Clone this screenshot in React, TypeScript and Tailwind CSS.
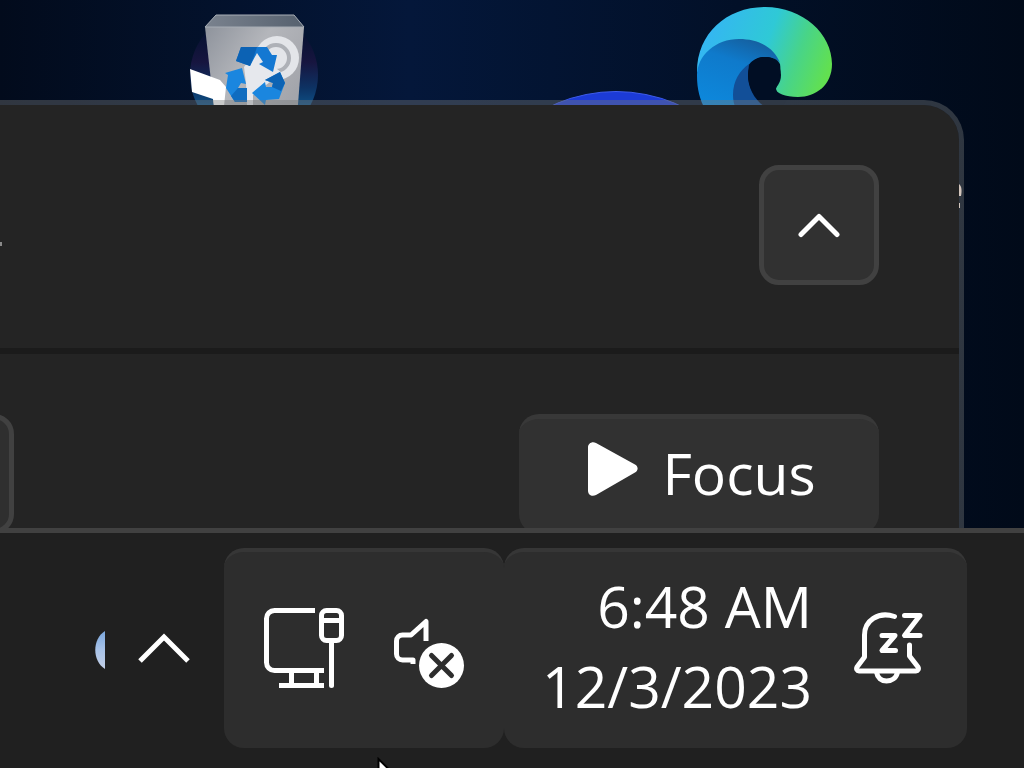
import type { ReactNode } from 'react';

interface TrayButtonProps {
  label: string;
  className?: string;
  children: ReactNode;
}

function RecycleBin() {
  return (
    <svg width="130" height="128" viewBox="188 0 130 128" aria-hidden="true">
      <defs>
        <linearGradient id="orb" x1="0" y1="0" x2="0" y2="1">
          <stop offset="0.15" stopColor="#04112f" />
          <stop offset="0.4" stopColor="#17153f" />
          <stop offset="0.6" stopColor="#0d3263" />
          <stop offset="0.75" stopColor="#0d5187" />
          <stop offset="1" stopColor="#0e5a94" />
        </linearGradient>
        <linearGradient id="bin" x1="0" y1="0" x2="1" y2="0.6">
          <stop offset="0" stopColor="#8e939c" />
          <stop offset="0.5" stopColor="#b4b6bb" />
          <stop offset="1" stopColor="#a3a5ab" />
        </linearGradient>
        <linearGradient id="binTop" x1="0" y1="0" x2="1" y2="0">
          <stop offset="0" stopColor="#7a828e" />
          <stop offset="1" stopColor="#56616f" />
        </linearGradient>
      </defs>
      <circle cx="254" cy="75" r="64" fill="url(#orb)" />
      <path d="M205 27h99l-7 90h-82z" fill="url(#bin)" />
      <path d="M190 69l30 11 6 7-2 19h-10l-1-7-21-7z" fill="#fff" />
      <path d="M205 27l11-12h78l10 12z" fill="url(#binTop)" stroke="#a7adb5" strokeWidth="1" />
      <circle cx="277" cy="58" r="22" fill="#e3e5e9" />
      <circle cx="276" cy="58" r="13" fill="none" stroke="#aeb1b7" strokeWidth="4" />
      <path d="M244 67l8-11h9l21 17-16 12-13 10v10h-6l-1-22z" fill="#e6e8ed" />
      <path d="M241 47h26l5 8h5l-4 17-14-8 4-2-6-9-7 13-14-5z" fill="#1478d2" />
      <path d="M241 47h16l-3 9-4 10-14-5z" fill="#0c62b4" />
      <path d="M225 73l17-5 4 16-5-1-3 5h9v14h-12l-9-14 2-13z" fill="#1a86df" />
      <path d="M238 88h9v14h-12l-4-6z" fill="#0f6cc0" />
      <path d="M280 72l5 11-6 16-13 1-1 5-13-12 13-11 1 5h6l1-4-8-3z" fill="#1a86df" />
      <path d="M280 72l5 11-4 8-9-4 1-4-8-3z" fill="#0c63b4" />
    </svg>
  );
}

function EdgeLogo() {
  return (
    <svg width="136" height="136" viewBox="696 6 136 136" aria-hidden="true">
      <defs>
        <linearGradient id="wave" x1="0" y1="0.35" x2="1" y2="0.6">
          <stop offset="0" stopColor="#35b4f5" />
          <stop offset="0.5" stopColor="#2fc9d6" />
          <stop offset="0.75" stopColor="#48d488" />
          <stop offset="1" stopColor="#62e050" />
        </linearGradient>
        <linearGradient id="sea" x1="0.7" y1="0" x2="0.3" y2="1">
          <stop offset="0" stopColor="#155f9e" />
          <stop offset="0.35" stopColor="#0f7acb" />
          <stop offset="1" stopColor="#0d88dc" />
        </linearGradient>
      </defs>
      <path
        d="M697 72C697 33 727 7 765 7c38 0 67 27 67 57 0 21-16 33-34 33-13 0-22-4-22-8 0-3 5-5 5-14 0-11-8-20-20-20z"
        fill="url(#wave)"
      />
      <path
        d="M697 76c0-21 19-37 42-37 22 0 36 10 41 24-5-5-10-6-16-6-10 0-19 8-19 20 0 11 6 22 20 32h-60c-5-9-8-20-8-33z"
        fill="url(#sea)"
      />
      <path d="M749 64c-9 6-16 17-16 31 0 5 1 10 3 14h32c-13-8-20-20-20-34z" fill="#124f98" />
      <path
        d="M780 64c2 12-4 22-4 25 0 4 6 8 14 8-8 7-6 12-16 12-16-4-26-20-26-34 0-11 7-18 17-18 8 0 12 2 15 7z"
        fill="#010e24"
      />
    </svg>
  );
}

function ChevronUp() {
  return (
    <svg width="42" height="26" viewBox="0 0 42 26" fill="none" aria-hidden="true">
      <path d="M3 22.500L21 4.500l18 18" stroke="#fff" strokeWidth="5" strokeLinecap="round" strokeLinejoin="round" />
    </svg>
  );
}

function NetworkIcon() {
  return (
    <svg width="80" height="80" viewBox="0 0 80 80" fill="none" stroke="#fff" strokeWidth="5" aria-hidden="true">
      <path d="M51 2.500H10.500a8 8 0 0 0-8 8v44a8 8 0 0 0 8 8H60" />
      <path d="M15 77.500h45M27.500 62.500v15M52.500 62.500v15" />
      <rect x="57.500" y="2.500" width="20" height="30" rx="5" />
      <path d="M57.500 12.500h20" />
      <path d="M67.500 34v43.500" strokeLinecap="round" />
    </svg>
  );
}

function MutedIcon() {
  return (
    <svg width="71" height="80" viewBox="0 -11 71 80" fill="none" aria-hidden="true">
      <path
        d="M19 45v-4H8.500a6 6 0 0 1-6-6V22a6 6 0 0 1 6-6H17L32 2.500V22"
        stroke="#fff"
        strokeWidth="5"
        strokeLinejoin="round"
      />
      <circle cx="47.500" cy="46.500" r="22.500" fill="#fff" />
      <path d="M37.500 36.500l20 20M57.500 36.500l-20 20" stroke="#2d2d2d" strokeWidth="5" strokeLinecap="round" />
    </svg>
  );
}

function SnoozeBellIcon() {
  return (
    <svg
      width="70"
      height="72"
      viewBox="0 0 70 72"
      fill="none"
      stroke="#fff"
      strokeWidth="5"
      strokeLinecap="round"
      strokeLinejoin="round"
      aria-hidden="true"
    >
      <path d="M40.500 4.500C24-1 10.500 9 10.500 23v22L3 55c-1 2 0 4 2 4h57c2 0 3-2 2-4l-8.500-11V33" />
      <path d="M22.500 60c1 6 5 9 10 9s10-3 11-9" />
      <path d="M28 23.500h13L28 38.500h13.500" />
      <path d="M50.500 3.500h15.500l-15.500 20h15.500" />
    </svg>
  );
}

function TrayButton({ label, className = '', children }: TrayButtonProps) {
  return (
    <button
      aria-label={label}
      className={`flex h-[200px] items-center rounded-[20px] border-t-4 border-[#363636] bg-[#2d2d2d] pb-1 ${className}`}
    >
      {children}
    </button>
  );
}

function Flyout() {
  return (
    <section className="absolute top-[100px] right-[60px] bottom-0 left-0 overflow-hidden rounded-tr-[40px] border-t-5 border-r-5 border-[#767878]/40 bg-[#242424] bg-clip-padding">
      <div className="flex items-start justify-between border-b-6 border-[#1b1b1b] pt-[60px] pr-20 pb-[63px]">
        <span className="mt-[77px] h-1 w-[2px] bg-[#8a8a8a]" />
        <button
          aria-label="Collapse calendar"
          className="flex size-[120px] items-center justify-center rounded-[20px] border-5 border-[#414141] bg-[#313131]"
        >
          <ChevronUp />
        </button>
      </div>
      <div className="flex justify-between pt-[60px] pr-20">
        <button
          aria-label="Increase focus time"
          className="-ml-[106px] size-[120px] rounded-[20px] border-5 border-[#414141] bg-[#2f2f2f]"
        />
        <button className="flex h-[120px] w-[360px] items-center justify-center gap-6 rounded-[20px] border-t-5 border-[#383838] bg-[#313131] pb-2 pl-1.5 text-[57px] leading-[80px]">
          <svg className="mb-2" width="50" height="54" viewBox="0 0 50 54" fill="#fff" aria-hidden="true">
            <path d="M0 5.500C0 1.500 4-1 8 1l39 21.500c3.500 2 3.500 6 0 8L8 53c-4 2-8 0-8-4.500z" />
          </svg>
          Focus
        </button>
      </div>
    </section>
  );
}

function Taskbar() {
  return (
    <footer className="relative flex items-center justify-end border-t-5 border-[#414141] bg-[#202020] pt-[15px] pr-[57px] pb-5">
      <button aria-label="Weather" className="mr-[33px]">
        <svg width="10" height="44" viewBox="0 -4 10 44" aria-hidden="true">
          <defs>
            <linearGradient id="globe" x1="0" y1="0" x2="0" y2="1">
              <stop offset="0" stopColor="#7ba7de" />
              <stop offset="0.500" stopColor="#a9c3e8" />
              <stop offset="1" stopColor="#c3cfe6" />
            </linearGradient>
          </defs>
          <path d="M10 1C-3 9-3 31 10 39z" fill="url(#globe)" />
        </svg>
      </button>
      <button aria-label="Show hidden icons" className="mr-[34px]">
        <svg width="52" height="30" viewBox="0 0 52 30" fill="none" aria-hidden="true">
          <path d="M2 28L26 4l24 24" stroke="#fff" strokeWidth="5" />
        </svg>
      </button>
      <TrayButton label="Network and volume" className="w-[280px] justify-between pr-[39px] pl-10">
        <NetworkIcon />
        <MutedIcon />
      </TrayButton>
      <TrayButton label="Clock and notifications" className="w-[463px] justify-end gap-[42px] pr-[43px]">
        <span className="pb-1 text-right text-[57px] leading-[80px]">
          6:48 AM
          <br />
          12/3/2023
        </span>
        <SnoozeBellIcon />
      </TrayButton>
      <svg className="absolute bottom-0 left-[377px]" width="14" height="11" viewBox="0 0 14 11" aria-hidden="true">
        <path d="M1.500 2v14h14z" fill="#fff" stroke="#000" strokeWidth="2" />
      </svg>
    </footer>
  );
}

export default function App() {
  return (
    <div className="flex min-h-screen flex-col overflow-hidden bg-[#020d1f] font-['Open_Sans',sans-serif] text-white">
      <main className="relative flex-1 overflow-hidden bg-linear-to-r from-[#020b1c] via-[#04173a] via-40% to-[#010a19]">
        <div className="absolute top-0 left-[188px]">
          <RecycleBin />
        </div>
        <div className="absolute top-[91px] left-[463px] size-[306px] rounded-full border-t border-[#3e5ce8] bg-[#1c3bd6]" />
        <div className="absolute top-[6px] left-[696px]">
          <EdgeLogo />
        </div>
        <Flyout />
        <svg className="absolute top-[183px] right-[62px]" width="4" height="26" viewBox="0 0 4 26" aria-hidden="true">
          <path d="M1 1c3 2 3 8 2 12H1zM1 20h1v5H1z" fill="#d3c6bd" />
        </svg>
      </main>
      <Taskbar />
    </div>
  );
}
